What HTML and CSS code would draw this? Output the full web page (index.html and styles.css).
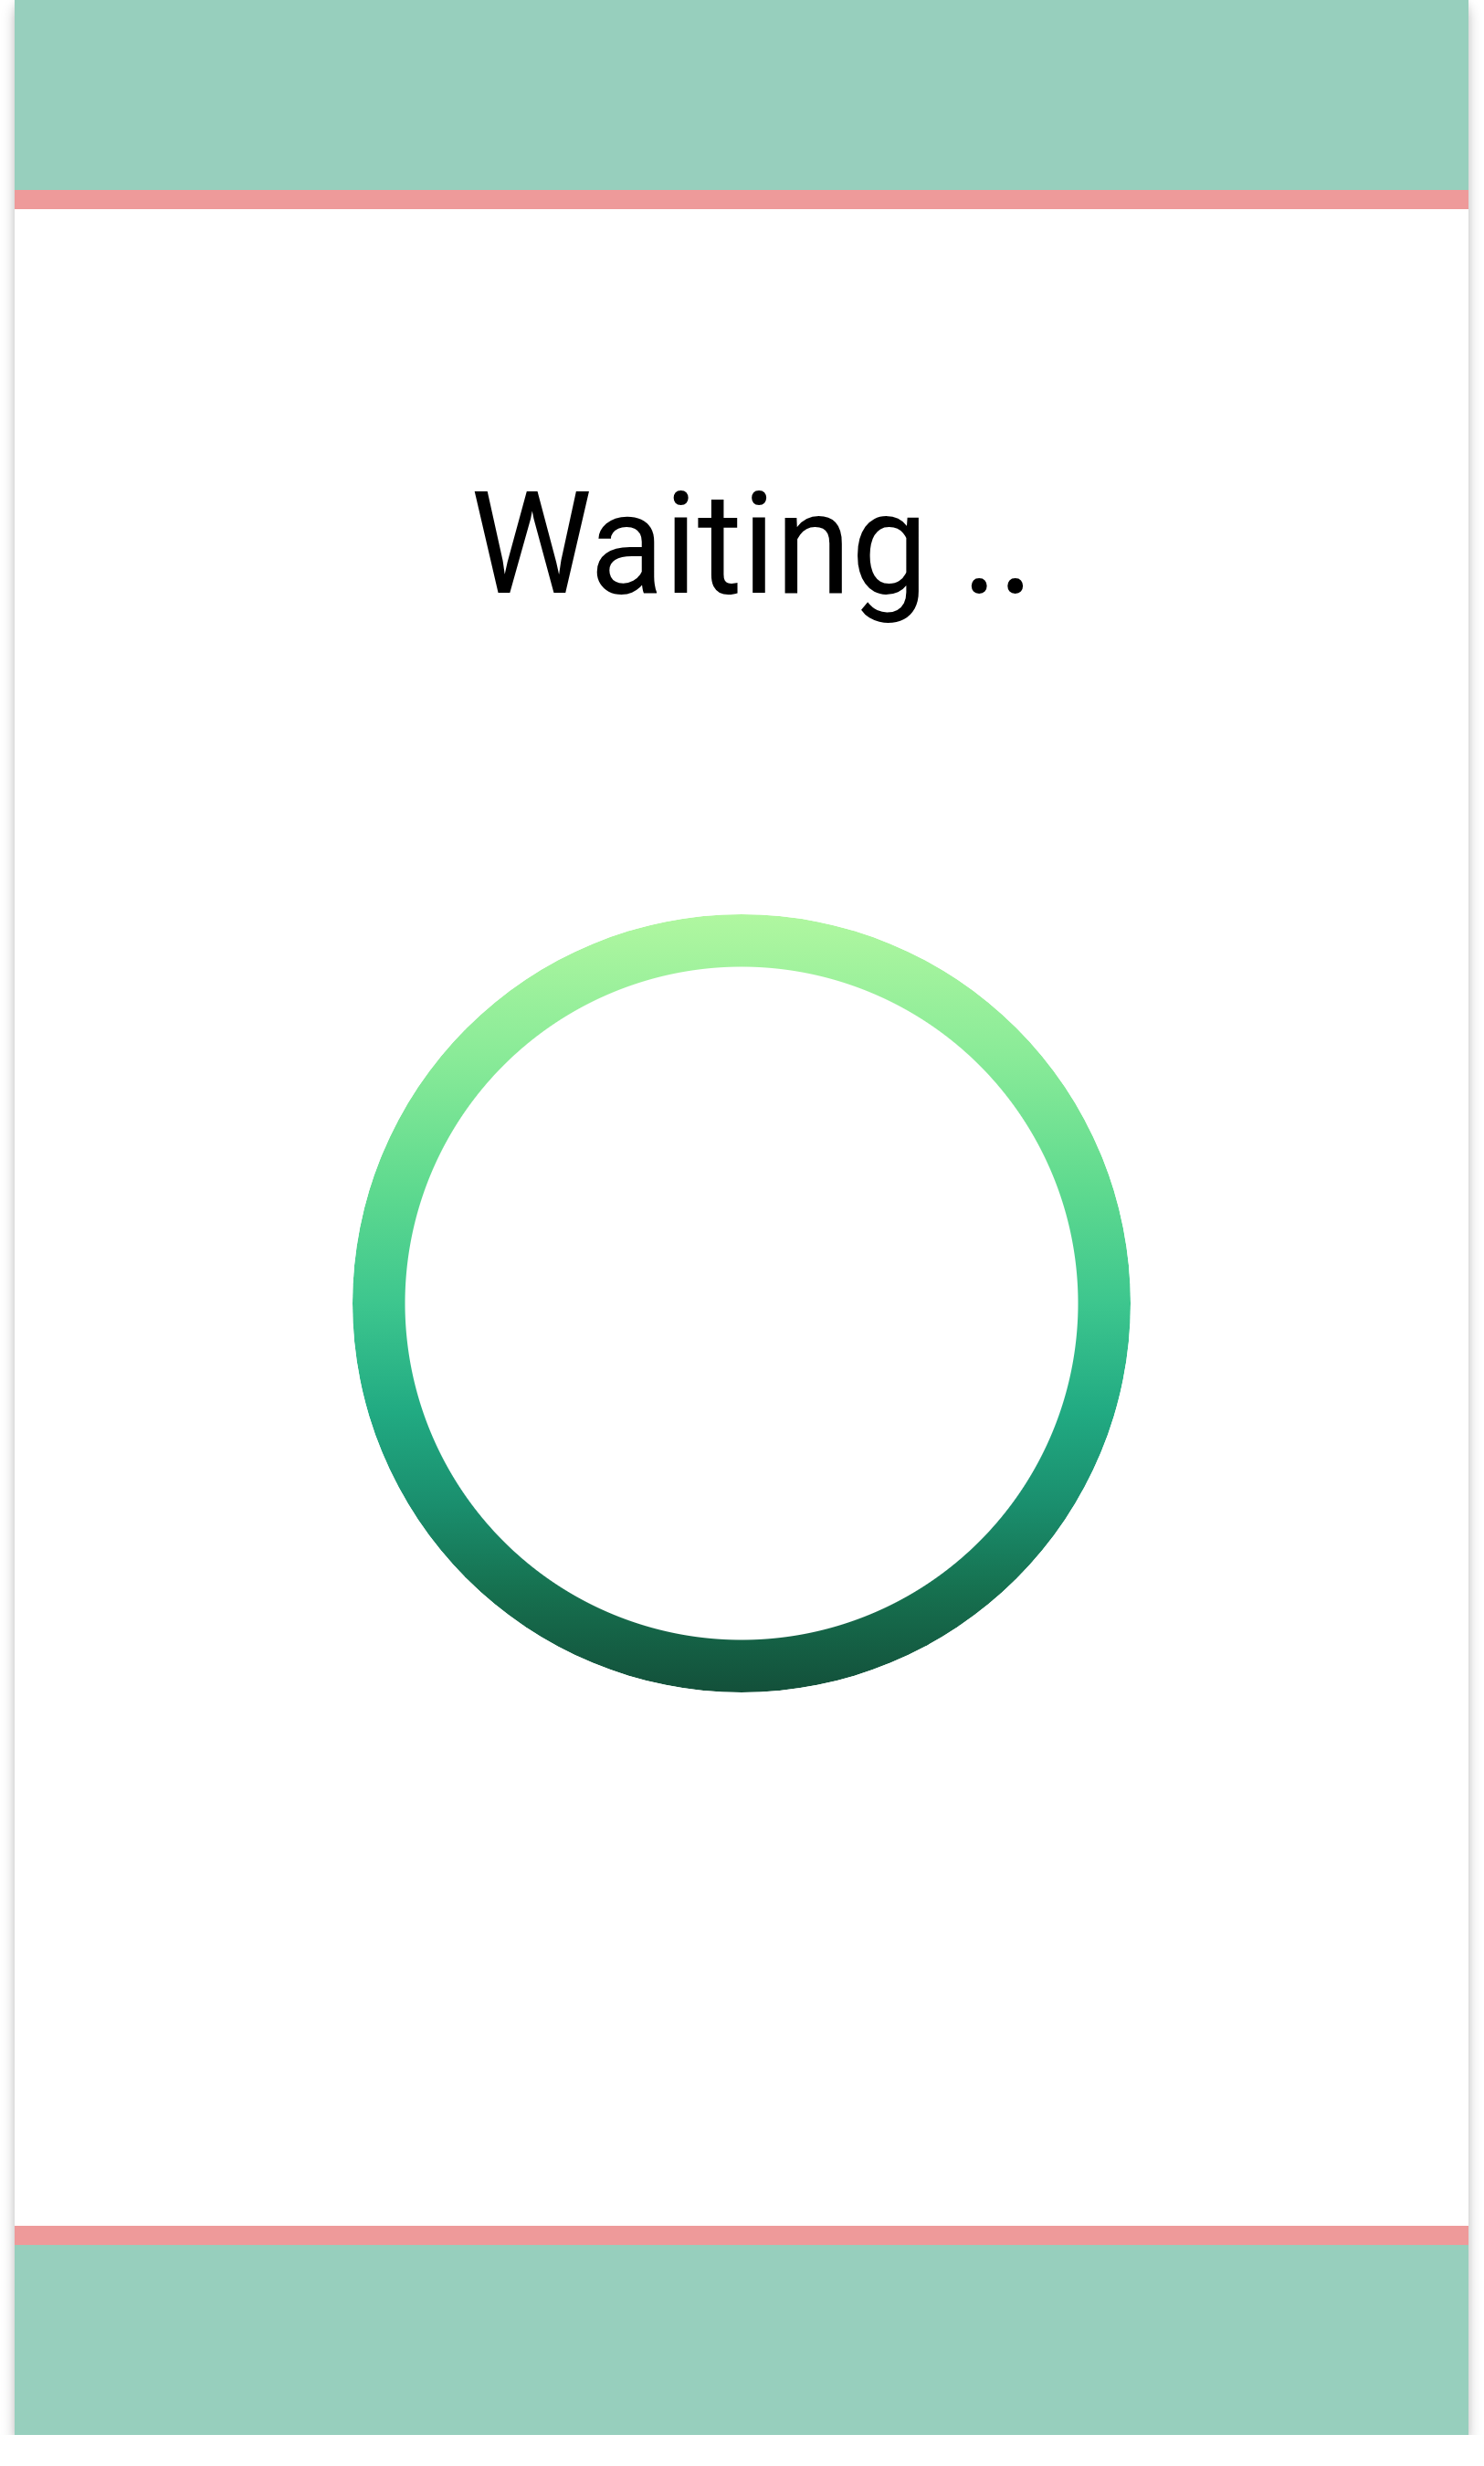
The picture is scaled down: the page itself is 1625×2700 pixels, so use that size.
FILE: index.html
```html
<!DOCTYPE html>
<html>
<head>
<meta charset="utf-8">
<link rel="stylesheet" href="styles.css">
</head>
<body>
<div class="card">
  <header class="bar bar-top"></header>
  <main class="content">
    <h1 class="title">Waiting ..</h1>
    <div class="ring"></div>
  </main>
  <footer class="bar bar-bottom"></footer>
</div>
</body>
</html>
```

FILE: styles.css
```css
html, body {
  margin: 0;
  padding: 0;
  background: #ffffff;
}
.card {
  margin: 0 17px 0 16px;
  height: 2666px;
  display: flex;
  flex-direction: column;
  background: #ffffff;
  box-shadow: 0 10px 14px rgba(0, 0, 0, 0.22), 0 0 8px rgba(0, 0, 0, 0.08);
}
.bar {
  height: 208px;
  background: #97cfbd;
  flex: none;
}
.bar-top {
  border-bottom: 21px solid #ee9a9a;
}
.bar-bottom {
  border-top: 21px solid #ee9a9a;
}
.content {
  flex: 1;
  display: flex;
  flex-direction: column;
  align-items: center;
  padding-top: 290px;
}
.title {
  margin: 0;
  font-family: Roboto, "Liberation Sans", sans-serif;
  font-weight: 400;
  font-size: 155px;
  line-height: 1;
  color: #000000;
  padding-left: 24px;
  transform: scaleX(0.967);
}
.ring {
  margin-top: 327px;
  width: 852px;
  height: 852px;
  border-radius: 50%;
  background: linear-gradient(180deg, #b0f7a0 0%, #8aeb98 18%, #5fda8f 35%, #3dc68e 50%, #21aa82 64%, #1a8e6d 76%, #16704f 87%, #13503a 100%);
  -webkit-mask: radial-gradient(circle closest-side, transparent 368px, #000 369px);
  mask: radial-gradient(circle closest-side, transparent 368px, #000 369px);
}
```
